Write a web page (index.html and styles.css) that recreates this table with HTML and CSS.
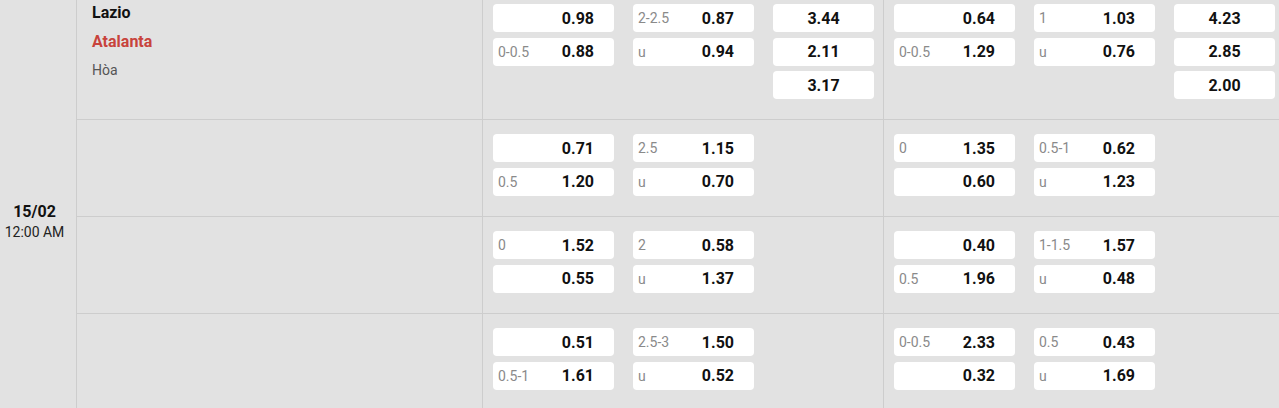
FILE: index.html
```html
<!DOCTYPE html>
<html lang="vi">
<head>
<meta charset="utf-8">
<title>Odds</title>
<link rel="stylesheet" href="styles.css">
</head>
<body>
<div class="board">
  <div class="date-col">
    <div class="date">15/02</div>
    <div class="time">12:00 AM</div>
  </div>
  <div class="rows">
    <div class="row row-first">
      <div class="teams">
        <div class="team home">Lazio</div>
        <div class="team away">Atalanta</div>
        <div class="team draw">Hòa</div>
      </div>
      <div class="market">
        <div class="col"><div class="box"><span class="lbl"></span><span class="val">0.98</span></div><div class="box"><span class="lbl">0-0.5</span><span class="val">0.88</span></div></div>
        <div class="col"><div class="box"><span class="lbl">2-2.5</span><span class="val">0.87</span></div><div class="box"><span class="lbl">u</span><span class="val">0.94</span></div></div>
        <div class="col col-x"><div class="box box-x"><span class="val">3.44</span></div><div class="box box-x"><span class="val">2.11</span></div><div class="box box-x"><span class="val">3.17</span></div></div>
      </div>
      <div class="market">
        <div class="col"><div class="box"><span class="lbl"></span><span class="val">0.64</span></div><div class="box"><span class="lbl">0-0.5</span><span class="val">1.29</span></div></div>
        <div class="col"><div class="box"><span class="lbl">1</span><span class="val">1.03</span></div><div class="box"><span class="lbl">u</span><span class="val">0.76</span></div></div>
        <div class="col col-x"><div class="box box-x"><span class="val">4.23</span></div><div class="box box-x"><span class="val">2.85</span></div><div class="box box-x"><span class="val">2.00</span></div></div>
      </div>
    </div>
    <div class="row">
      <div class="teams"></div>
      <div class="market">
        <div class="col"><div class="box"><span class="lbl"></span><span class="val">0.71</span></div><div class="box"><span class="lbl">0.5</span><span class="val">1.20</span></div></div>
        <div class="col"><div class="box"><span class="lbl">2.5</span><span class="val">1.15</span></div><div class="box"><span class="lbl">u</span><span class="val">0.70</span></div></div>
        <div class="col col-x"></div>
      </div>
      <div class="market">
        <div class="col"><div class="box"><span class="lbl">0</span><span class="val">1.35</span></div><div class="box"><span class="lbl"></span><span class="val">0.60</span></div></div>
        <div class="col"><div class="box"><span class="lbl">0.5-1</span><span class="val">0.62</span></div><div class="box"><span class="lbl">u</span><span class="val">1.23</span></div></div>
        <div class="col col-x"></div>
      </div>
    </div>
    <div class="row">
      <div class="teams"></div>
      <div class="market">
        <div class="col"><div class="box"><span class="lbl">0</span><span class="val">1.52</span></div><div class="box"><span class="lbl"></span><span class="val">0.55</span></div></div>
        <div class="col"><div class="box"><span class="lbl">2</span><span class="val">0.58</span></div><div class="box"><span class="lbl">u</span><span class="val">1.37</span></div></div>
        <div class="col col-x"></div>
      </div>
      <div class="market">
        <div class="col"><div class="box"><span class="lbl"></span><span class="val">0.40</span></div><div class="box"><span class="lbl">0.5</span><span class="val">1.96</span></div></div>
        <div class="col"><div class="box"><span class="lbl">1-1.5</span><span class="val">1.57</span></div><div class="box"><span class="lbl">u</span><span class="val">0.48</span></div></div>
        <div class="col col-x"></div>
      </div>
    </div>
    <div class="row">
      <div class="teams"></div>
      <div class="market">
        <div class="col"><div class="box"><span class="lbl"></span><span class="val">0.51</span></div><div class="box"><span class="lbl">0.5-1</span><span class="val">1.61</span></div></div>
        <div class="col"><div class="box"><span class="lbl">2.5-3</span><span class="val">1.50</span></div><div class="box"><span class="lbl">u</span><span class="val">0.52</span></div></div>
        <div class="col col-x"></div>
      </div>
      <div class="market">
        <div class="col"><div class="box"><span class="lbl">0-0.5</span><span class="val">2.33</span></div><div class="box"><span class="lbl"></span><span class="val">0.32</span></div></div>
        <div class="col"><div class="box"><span class="lbl">0.5</span><span class="val">0.43</span></div><div class="box"><span class="lbl">u</span><span class="val">1.69</span></div></div>
        <div class="col col-x"></div>
      </div>
    </div>
  </div>
</div>
</body>
</html>
```
FILE: styles.css
```css
html, body {
  margin: 0;
  padding: 0;
  background: #e2e2e2;
  overflow: hidden;
}

body {
  font-family: Roboto, "Liberation Sans", Arial, sans-serif;
  color: #111;
}

.board {
  display: flex;
  width: 1285px;
  height: 408px;
  background: #e2e2e2;
}

.date-col {
  flex: 0 0 auto;
  width: 69px;
  padding-right: 7px;
  padding-top: 202px;
  border-right: 1px solid #cdcdcd;
  text-align: center;
}

.date {
  font-size: 16px;
  font-weight: 700;
  line-height: 20px;
  color: #111;
}

.time {
  font-size: 14px;
  line-height: 20px;
  color: #222;
}

.rows {
  display: flex;
  flex-direction: column;
}

.row {
  flex: 0 0 auto;
  display: flex;
  height: 96px;
  border-top: 1px solid #cdcdcd;
}

.row-first {
  height: 119px;
  border-top: none;
}

.teams {
  flex: 0 0 auto;
  width: 390px;
  padding-left: 15px;
  border-right: 1px solid #cdcdcd;
}

.team {
  line-height: 28.5px;
}

.home {
  margin-top: -1px;
  font-size: 16px;
  font-weight: 700;
  color: #111;
}

.away {
  font-size: 16px;
  font-weight: 700;
  color: #c8433c;
}

.draw {
  font-size: 14px;
  color: #555;
}

.market {
  flex: 0 0 auto;
  display: flex;
  gap: 19px;
  width: 390px;
  padding-left: 10px;
  padding-top: 14px;
  border-right: 1px solid #cdcdcd;
}

.row-first .market {
  padding-top: 4px;
}

.col {
  display: flex;
  flex-direction: column;
  gap: 5.5px;
  width: 121px;
}

.col-x {
  width: 101px;
}

.box {
  display: flex;
  align-items: center;
  height: 28px;
  padding: 0 20px 0 5px;
  background: #fff;
  border-radius: 4px;
}

.lbl {
  flex: 1 1 auto;
  font-size: 14px;
  color: #8a8a8a;
}

.val {
  font-size: 16px;
  font-weight: 700;
  color: #111;
}

.box-x {
  justify-content: center;
  padding: 0;
}
```
